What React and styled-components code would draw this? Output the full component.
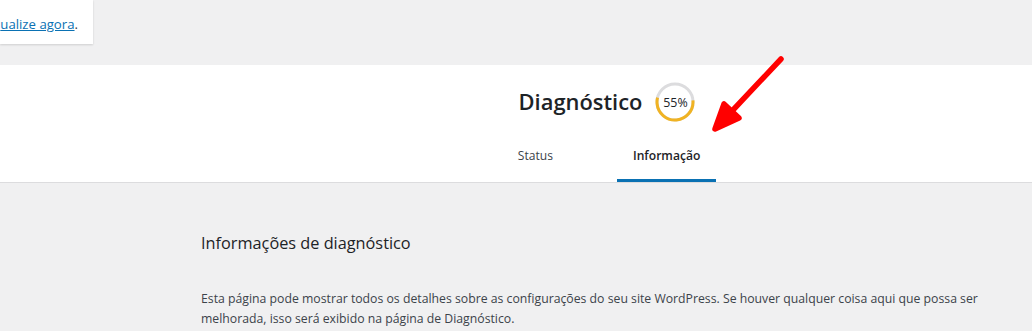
import styled, { createGlobalStyle } from "styled-components";

const GlobalStyle = createGlobalStyle`
    html, body {
        margin: 0;
        padding: 0;
        background: #f0f0f1;
        font-family: "Open Sans", "Noto Sans", sans-serif;
        color: #3c434a;
        overflow: hidden;
    }
`;

const Page = styled.div`
    position: relative;
    width: 1032px;
    height: 331px;
    overflow: hidden;
`;

const Notice = styled.div`
    width: 78px;
    height: 40px;
    padding: 4px 15px 0 0;
    display: flex;
    align-items: center;
    justify-content: flex-end;
    background: #fff;
    box-shadow: 0 1px 2px rgba(0, 0, 0, 0.14);
    font-size: 13.2px;
    line-height: 20px;
    white-space: nowrap;
`;

const Link = styled.a`
    color: #0a71b3;
    text-decoration: underline;
`;

const Header = styled.header`
    margin-top: 21px;
    background: #fff;
    border-bottom: 1px solid #dcdcde;
    padding-left: 170px;
    text-align: center;
`;

const TitleSection = styled.div`
    display: flex;
    align-items: center;
    justify-content: center;
    gap: 13px;
    padding-top: 17px;
    margin-bottom: 16px;
    padding-left: 12px;
`;

const Title = styled.h1`
    margin: 0;
    font-size: 21.9px;
    font-weight: 600;
    line-height: 40px;
    color: #1d2327;
`;

const Score = styled.div`
    position: relative;
    width: 40px;
    height: 40px;
    display: flex;
    align-items: center;
    justify-content: center;
    font-size: 12.4px;
    color: #1d2327;

    & > svg {
        position: absolute;
        inset: 0;
    }
`;

const Tabs = styled.nav`
    display: inline-grid;
    grid-template-columns: 1fr 1fr;
`;

const Tab = styled.a`
    display: block;
    margin: 0 16px;
    padding: 8px 16px 16px;
    font-size: 12.1px;
    line-height: 20px;
    color: ${(p) => (p.$active ? "#1d2327" : "#3c434a")};
    font-weight: ${(p) => (p.$active ? 600 : 400)};
    box-shadow: ${(p) => (p.$active ? "inset 0 -3px #0a71b3" : "none")};
`;

const Body = styled.main`
    padding-left: 170px;
`;

const Inner = styled.section`
    max-width: 800px;
    margin: 0 auto;
`;

const SectionTitle = styled.h2`
    margin: 48px 0 34px;
    font-size: 16.3px;
    font-weight: 400;
    line-height: 24px;
    color: #1d2327;
`;

const Text = styled.p`
    margin: 0;
    font-size: 12.25px;
    line-height: 19.5px;
    color: #3c434a;
`;

const Arrow = styled.svg`
    position: absolute;
    left: 700px;
    top: 50px;
    width: 100px;
    height: 90px;
`;

function ScoreRing({ value }) {
    const r = 18;
    const c = 2 * Math.PI * r;
    const len = (value / 100) * c;
    return (
        <svg viewBox="0 0 40 40" width="40" height="40">
            <circle cx="20" cy="20" r={r} fill="none" stroke="#dcdcde" strokeWidth="3" />
            <circle
                cx="20"
                cy="20"
                r={r}
                fill="none"
                stroke="#f0b323"
                strokeWidth="3"
                strokeDasharray={`${len} ${c}`}
                transform="rotate(-5 20 20)"
            />
        </svg>
    );
}

export default function App() {
    return (
        <Page>
            <GlobalStyle />
            <Notice>
                <span><Link href="#">ualize agora</Link>.</span>
            </Notice>
            <Header>
                <TitleSection>
                    <Title>Diagnóstico</Title>
                    <Score>
                        <ScoreRing value={55} />
                        <span>55%</span>
                    </Score>
                </TitleSection>
                <Tabs>
                    <Tab>Status</Tab>
                    <Tab $active>Informação</Tab>
                </Tabs>
            </Header>
            <Body>
                <Inner>
                    <SectionTitle>Informações de diagnóstico</SectionTitle>
                    <Text>
                        Esta página pode mostrar todos os detalhes sobre as configurações do seu site WordPress. Se houver qualquer coisa aqui que possa ser melhorada, isso será exibido na página de Diagnóstico.
                    </Text>
                </Inner>
            </Body>
            <Arrow viewBox="700 50 100 90">
                <g stroke="#ff0000" strokeWidth="5.5" strokeLinecap="round" strokeLinejoin="round" fill="#ff0000">
                    <line x1="781" y1="59" x2="718" y2="126" />
                    <path d="M724 104 L715 129 L739 118 Z" />
                </g>
            </Arrow>
        </Page>
    );
}
